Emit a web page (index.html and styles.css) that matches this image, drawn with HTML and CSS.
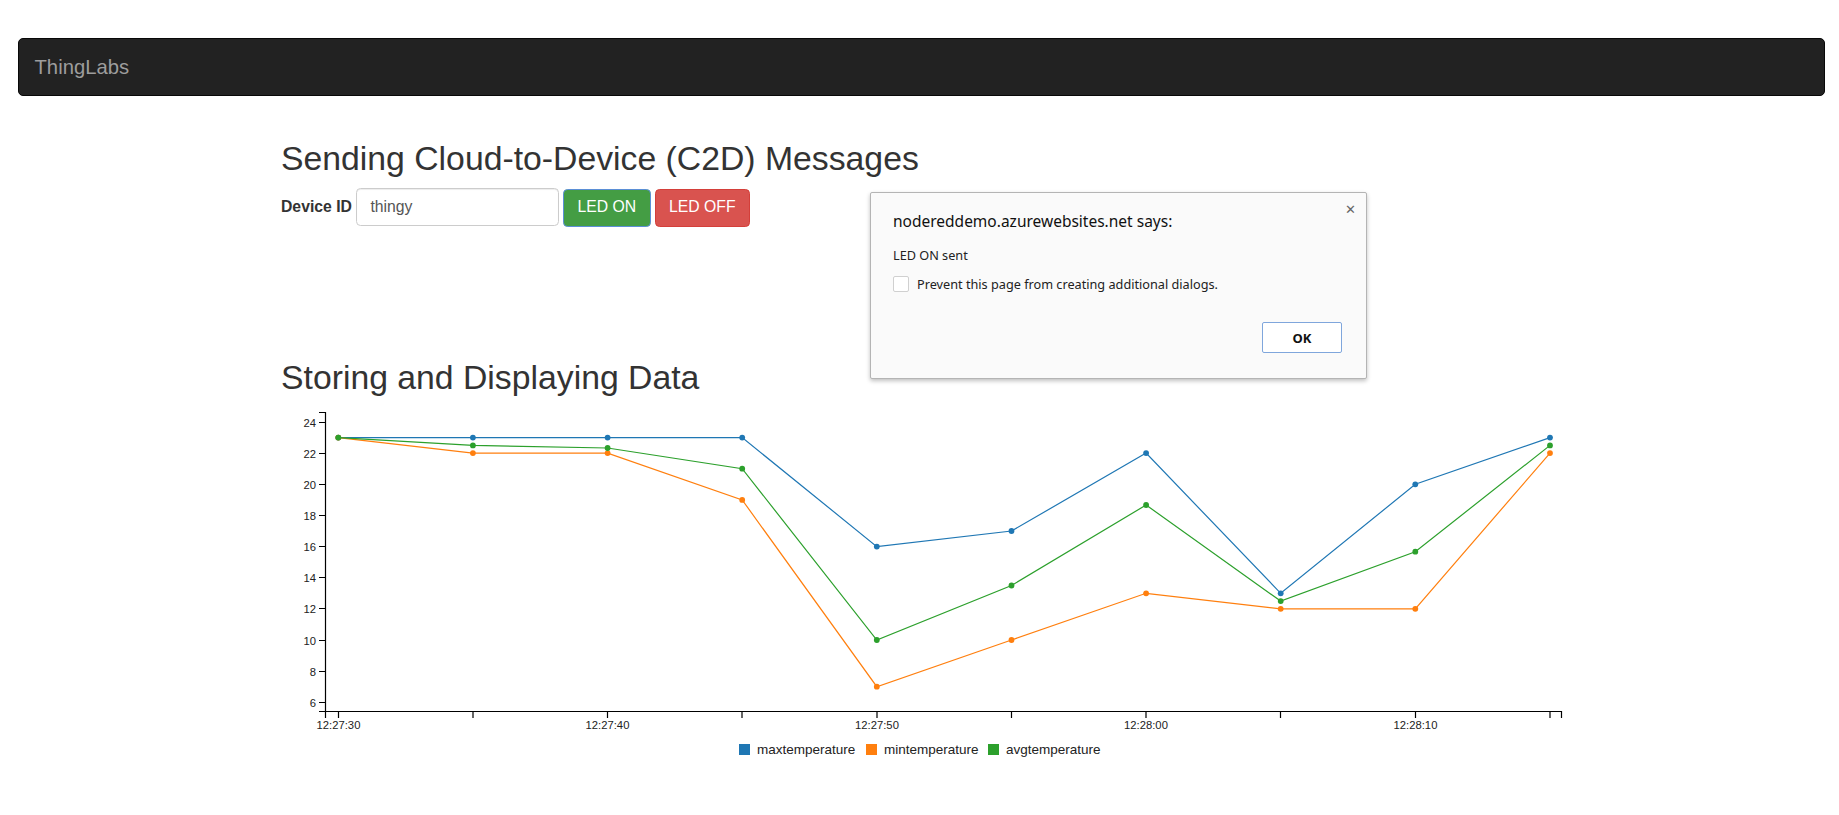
FILE: index.html
```html
<!DOCTYPE html>
<html lang="en">
<head>
<meta charset="utf-8">
<title>ThingLabs</title>
<link rel="stylesheet" href="styles.css">
</head>
<body>
<div class="page">
  <nav class="navbar">
    <span class="brand">ThingLabs</span>
  </nav>

  <main class="container">
    <h2 class="title">Sending Cloud-to-Device (C2D) Messages</h2>
    <form class="device-form">
      <label class="device-label">Device ID</label>
      <input class="device-input" type="text" value="thingy">
      <button type="button" class="btn btn-on">LED ON</button>
      <button type="button" class="btn btn-off">LED OFF</button>
    </form>

    <h2 class="title section-title">Storing and Displaying Data</h2>
    <svg class="chart" width="1290" height="360" viewBox="0 0 1290 360">
      <g class="axis" fill="none" stroke="#000" stroke-width="1.2">
        <path d="M38,5.5 H44.5 V304.5 H38"/>
        <path d="M44.5,311 V304.5 H1280.5 V311"/>
        <path d="M38,15.5 H44.5 M38,46.5 H44.5 M38,77.5 H44.5 M38,108.5 H44.5 M38,139.5 H44.5 M38,170.5 H44.5 M38,201.5 H44.5 M38,233.5 H44.5 M38,264.5 H44.5 M38,295.5 H44.5"/>
        <path d="M57.5,304.5 V311 M192,304.5 V311 M326.5,304.5 V311 M461,304.5 V311 M596,304.5 V311 M730.5,304.5 V311 M865,304.5 V311 M999.5,304.5 V311 M1134.5,304.5 V311 M1269,304.5 V311"/>
      </g>
      <g class="tick-text" text-anchor="end">
        <text x="35" y="19.5">24</text>
        <text x="35" y="50.5">22</text>
        <text x="35" y="81.5">20</text>
        <text x="35" y="112.5">18</text>
        <text x="35" y="143.5">16</text>
        <text x="35" y="174.5">14</text>
        <text x="35" y="205.5">12</text>
        <text x="35" y="237.5">10</text>
        <text x="35" y="268.5">8</text>
        <text x="35" y="299.5">6</text>
      </g>
      <g class="tick-text" text-anchor="middle">
        <text x="57.5" y="321.5">12:27:30</text>
        <text x="326.5" y="321.5">12:27:40</text>
        <text x="596" y="321.5">12:27:50</text>
        <text x="865" y="321.5">12:28:00</text>
        <text x="1134.5" y="321.5">12:28:10</text>
      </g>

      <g class="series" stroke="#1f77b4" fill="#1f77b4">
        <polyline fill="none" points="57.3,30.6 191.9,30.6 326.6,30.6 461.2,30.6 595.8,139.6 730.5,124.0 865.1,46.1 999.7,186.3 1134.3,77.3 1269,30.6"/>
        <g stroke="none">
          <circle cx="57.3" cy="30.6" r="2.9"/><circle cx="191.9" cy="30.6" r="2.9"/><circle cx="326.6" cy="30.6" r="2.9"/><circle cx="461.2" cy="30.6" r="2.9"/><circle cx="595.8" cy="139.6" r="2.9"/><circle cx="730.5" cy="124.0" r="2.9"/><circle cx="865.1" cy="46.1" r="2.9"/><circle cx="999.7" cy="186.3" r="2.9"/><circle cx="1134.3" cy="77.3" r="2.9"/><circle cx="1269" cy="30.6" r="2.9"/>
        </g>
      </g>
      <g class="series" stroke="#ff7f0e" fill="#ff7f0e">
        <polyline fill="none" points="57.3,30.6 191.9,46.1 326.6,46.1 461.2,92.9 595.8,279.7 730.5,233.0 865.1,186.3 999.7,201.8 1134.3,201.8 1269,46.1"/>
        <g stroke="none">
          <circle cx="57.3" cy="30.6" r="2.9"/><circle cx="191.9" cy="46.1" r="2.9"/><circle cx="326.6" cy="46.1" r="2.9"/><circle cx="461.2" cy="92.9" r="2.9"/><circle cx="595.8" cy="279.7" r="2.9"/><circle cx="730.5" cy="233.0" r="2.9"/><circle cx="865.1" cy="186.3" r="2.9"/><circle cx="999.7" cy="201.8" r="2.9"/><circle cx="1134.3" cy="201.8" r="2.9"/><circle cx="1269" cy="46.1" r="2.9"/>
        </g>
      </g>
      <g class="series" stroke="#2ca02c" fill="#2ca02c">
        <polyline fill="none" points="57.3,30.6 191.9,38.4 326.6,41.0 461.2,61.7 595.8,233.0 730.5,178.5 865.1,98.0 999.7,194.1 1134.3,144.7 1269,38.4"/>
        <g stroke="none">
          <circle cx="57.3" cy="30.6" r="2.9"/><circle cx="191.9" cy="38.4" r="2.9"/><circle cx="326.6" cy="41.0" r="2.9"/><circle cx="461.2" cy="61.7" r="2.9"/><circle cx="595.8" cy="233.0" r="2.9"/><circle cx="730.5" cy="178.5" r="2.9"/><circle cx="865.1" cy="98.0" r="2.9"/><circle cx="999.7" cy="194.1" r="2.9"/><circle cx="1134.3" cy="144.7" r="2.9"/><circle cx="1269" cy="38.4" r="2.9"/>
        </g>
      </g>

      <g class="legend">
        <rect x="458" y="337" width="11" height="11" fill="#1f77b4"/>
        <text x="476" y="347">maxtemperature</text>
        <rect x="585" y="337" width="11" height="11" fill="#ff7f0e"/>
        <text x="603" y="347">mintemperature</text>
        <rect x="707" y="337" width="11" height="11" fill="#2ca02c"/>
        <text x="725" y="347">avgtemperature</text>
      </g>
    </svg>
  </main>

  <div class="dialog" role="dialog">
    <span class="dialog-close">&#x2715;</span>
    <div class="dialog-title">nodereddemo.azurewebsites.net says:</div>
    <div class="dialog-message">LED ON sent</div>
    <label class="dialog-check"><span class="checkbox"></span>Prevent this page from creating additional dialogs.</label>
    <div class="dialog-actions">
      <button type="button" class="dialog-ok">OK</button>
    </div>
  </div>
</div>
</body>
</html>
```

FILE: styles.css
```css
* { box-sizing: border-box; }

body {
  margin: 0;
  background: #fff;
  font-family: "Liberation Sans", Arial, sans-serif;
  font-size: 15.75px;
  line-height: 1.42857;
  color: #333;
}

.page {
  position: relative;
  padding: 38px 14px 0 17.5px;
  min-height: 815px;
}

.navbar {
  height: 58px;
  background: #222;
  border: 1px solid #080808;
  border-radius: 5px;
  display: flex;
  align-items: center;
  padding-left: 16px;
  margin-bottom: 44px;
}

.brand {
  font-size: 20.25px;
  color: #9d9d9d;
  line-height: 1;
}

.container {
  margin-left: 263.5px;
}

.title {
  font-family: "Liberation Sans", Arial, sans-serif;
  font-weight: normal;
  font-size: 33.75px;
  line-height: 1.1;
  color: #333;
  margin: 22.5px 0 11.25px;
}

.section-title {
  margin-top: 132px;
}

.device-form {
  display: flex;
  align-items: baseline;
  margin: 0;
}

.device-label {
  font-weight: bold;
  margin-right: 4px;
}

.device-input {
  width: 203px;
  height: 38px;
  padding: 6.75px 13.5px;
  font-family: inherit;
  font-size: 15.75px;
  color: #555;
  background: #fff;
  border: 1px solid #ccc;
  border-radius: 4.5px;
  box-shadow: inset 0 1px 1px rgba(0,0,0,.075);
  margin-right: 4px;
}

.btn {
  height: 38px;
  padding: 6.75px 13.5px;
  font-family: inherit;
  font-size: 15.75px;
  line-height: 1.42857;
  color: #fff;
  border: 1px solid transparent;
  border-radius: 4.5px;
  cursor: pointer;
}

.btn-on {
  background: #449d44;
  border-color: #5b8fd6;
  margin-right: 4px;
}

.btn-off {
  background: #d9534f;
  border-color: #d43f3a;
}

.chart {
  display: block;
  overflow: visible;
}

.series polyline {
  stroke-width: 1.2;
}

.tick-text text {
  font-family: "Liberation Sans", Arial, sans-serif;
  font-size: 11.25px;
  fill: #222;
}

.legend text {
  font-family: "Liberation Sans", Arial, sans-serif;
  font-size: 13.5px;
  fill: #222;
}

/* alert dialog */
.dialog {
  position: absolute;
  left: 870px;
  top: 192px;
  width: 497px;
  height: 187px;
  background: #fafafa;
  border: 1px solid #b4b4b4;
  border-radius: 2px;
  box-shadow: 0 2px 4px rgba(0,0,0,.25);
  padding: 17px 23px 0 22px;
  font-family: "Noto Sans", "Open Sans", sans-serif;
  color: #222;
}

.dialog-close {
  position: absolute;
  top: 7px;
  right: 10px;
  font-size: 13px;
  color: #666;
}

.dialog-title {
  font-size: 15.5px;
  line-height: 22px;
  color: #111;
}

.dialog-message {
  font-size: 12.7px;
  line-height: 18px;
  margin-top: 14px;
}

.dialog-check {
  display: flex;
  align-items: center;
  font-size: 12.7px;
  line-height: 18px;
  margin-top: 11px;
}

.checkbox {
  width: 16px;
  height: 16px;
  border: 1px solid #d0d0d0;
  border-radius: 2px;
  background: #fff;
  margin-right: 8px;
}

.dialog-actions {
  display: flex;
  justify-content: flex-end;
  margin-top: 29px;
  padding-right: 1px;
}

.dialog-ok {
  width: 80px;
  height: 31px;
  font-family: "Noto Sans", "Open Sans", sans-serif;
  font-size: 13px;
  font-weight: bold;
  color: #111;
  background: #fff;
  border: 1px solid #7fa6dc;
  border-radius: 2px;
}
```
